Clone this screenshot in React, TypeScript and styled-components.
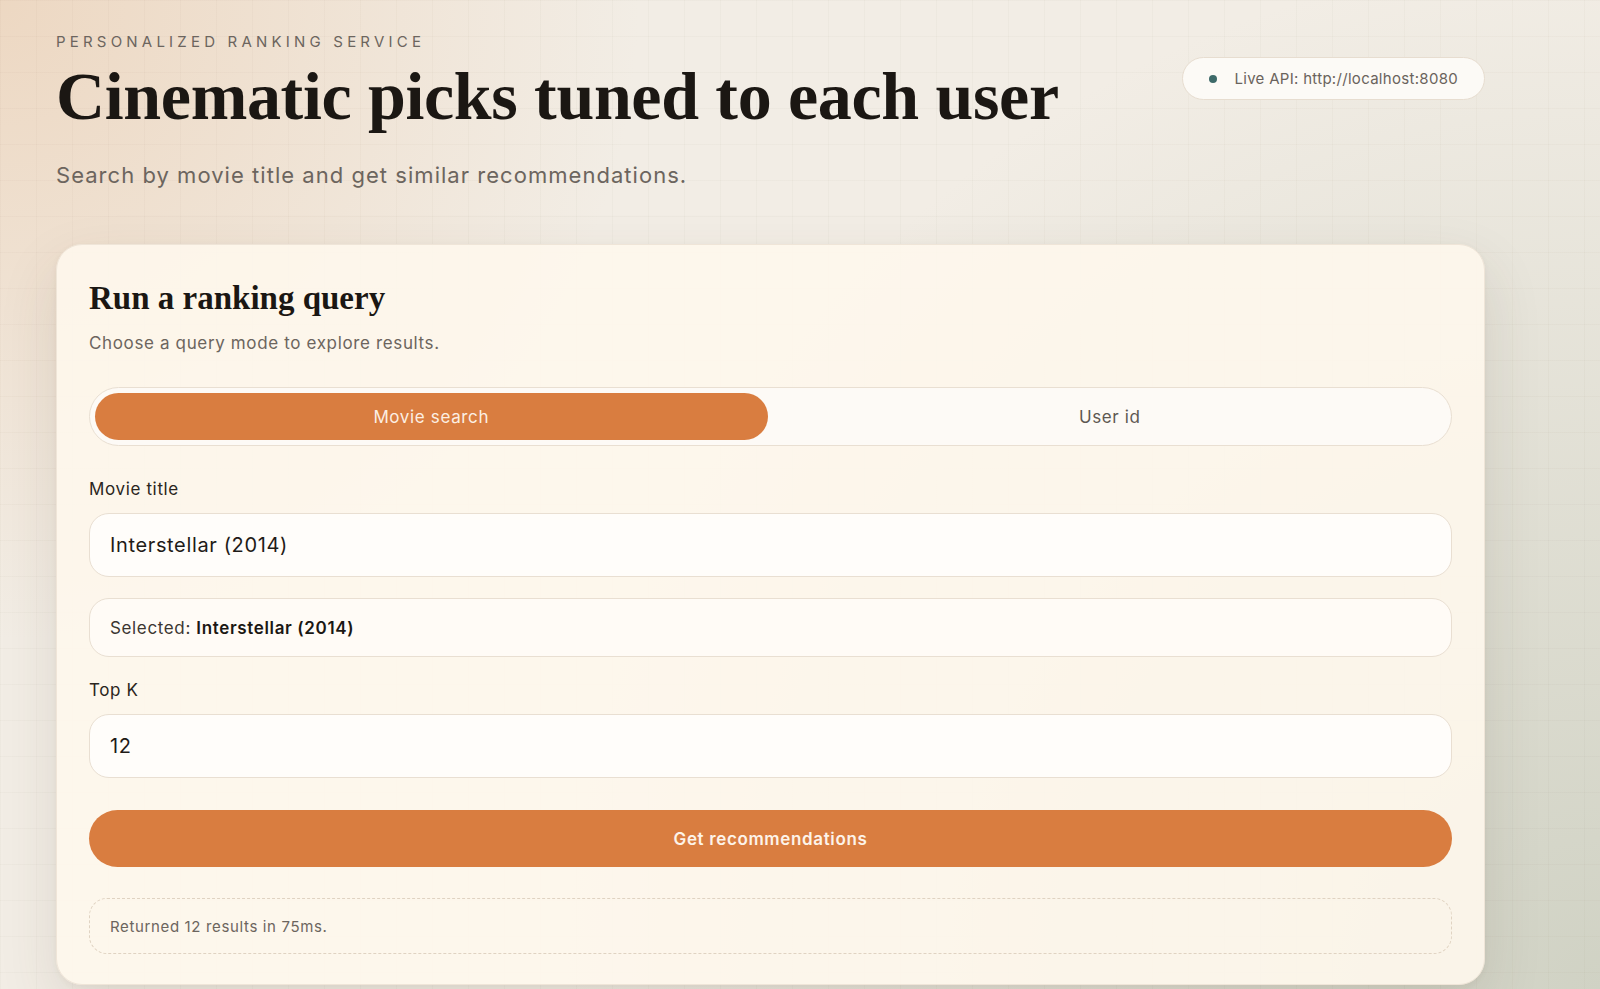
import * as React from 'react';
import styled, { createGlobalStyle } from 'styled-components';

const GlobalStyle = createGlobalStyle`
  * {
    box-sizing: border-box;
  }
  html, body {
    margin: 0;
    padding: 0;
  }
  body {
    min-height: 100vh;
    font-family: Inter, 'Noto Sans', sans-serif;
    letter-spacing: 0.04em;
    color: #1d1915;
    background-color: #f2ede5;
    background-image:
      linear-gradient(rgba(120, 100, 80, 0.035) 1px, transparent 1px),
      linear-gradient(90deg, rgba(120, 100, 80, 0.035) 1px, transparent 1px),
      radial-gradient(circle at 0% 0%, rgba(236, 212, 188, 0.85) 0, rgba(236, 212, 188, 0) 34%),
      radial-gradient(circle at 100% 100%, rgba(208, 210, 196, 1) 0, rgba(208, 210, 196, 0) 55%);
    background-size: 36px 36px, 36px 36px, 100% 100%, 100% 100%;
  }
`;

const Shell = styled.main`
  width: 1429px;
  margin-left: 56px;
  padding: 32px 0 6px;
`;

const Header = styled.header`
  display: flex;
  justify-content: space-between;
  align-items: flex-start;
`;

const HeaderText = styled.div`
  display: flex;
  flex-direction: column;
`;

const Eyebrow = styled.div`
  font-size: 15px;
  line-height: 20px;
  letter-spacing: 0.28em;
  text-transform: uppercase;
  color: #6c655e;
`;

const Title = styled.h1`
  margin: 8px 0 0;
  font-family: 'Liberation Serif', 'DejaVu Serif', serif;
  font-weight: 700;
  font-size: 68px;
  line-height: 72px;
  letter-spacing: -0.005em;
  color: #1b1713;
`;

const Lead = styled.p`
  margin: 27px 0 0;
  font-size: 22px;
  line-height: 33px;
  letter-spacing: 0.047em;
  color: #6c655e;
`;

const StatusPill = styled.div`
  margin-top: 25px;
  display: flex;
  align-items: center;
  gap: 17px;
  height: 43px;
  padding: 0 26px;
  border: 1.5px solid #e7ddd0;
  border-radius: 999px;
  background: #fcfaf6;
  font-size: 15px;
  letter-spacing: 0.02em;
  color: #6a635c;
`;

const Dot = styled.span`
  width: 8px;
  height: 8px;
  border-radius: 50%;
  background: #3d6a69;
`;

const Card = styled.section`
  margin-top: 52px;
  padding: 34px 32px 30px;
  border: 1.5px solid #efe5d8;
  border-radius: 26px;
  background: rgba(254, 247, 236, 0.9);
  box-shadow: 0 24px 60px rgba(70, 60, 45, 0.12), 0 2px 6px rgba(70, 60, 45, 0.05);
`;

const CardTitle = styled.h2`
  margin: 0;
  font-family: 'Liberation Serif', 'DejaVu Serif', serif;
  font-weight: 700;
  font-size: 33px;
  line-height: 38px;
  letter-spacing: 0;
  color: #1b1713;
`;

const CardSub = styled.p`
  margin: 14px 0 0;
  font-size: 17px;
  line-height: 25px;
  color: #6c655e;
`;

const Toggle = styled.div`
  margin-top: 31px;
  display: grid;
  grid-template-columns: 1fr 1fr;
  gap: 6px;
  padding: 5px;
  height: 59px;
  border: 1.5px solid #e9dfd2;
  border-radius: 999px;
  background: #fdfaf6;
`;

const ToggleOption = styled.button<{ $active?: boolean }>`
  border: none;
  border-radius: 999px;
  font-family: inherit;
  font-size: 17px;
  letter-spacing: inherit;
  cursor: pointer;
  background: ${(p) => (p.$active ? '#d97d40' : 'transparent')};
  color: ${(p) => (p.$active ? '#fcefe3' : '#5e5852')};
`;

const Form = styled.div`
  margin-top: 31px;
  display: flex;
  flex-direction: column;
  gap: 21px;
`;

const Field = styled.label`
  display: flex;
  flex-direction: column;
  gap: 11px;
`;

const Label = styled.span`
  font-size: 17px;
  line-height: 25px;
  color: #2a2520;
`;

const Input = styled.input`
  height: 64px;
  padding: 0 20px;
  border: 1.5px solid #e9dfd2;
  border-radius: 20px;
  background: #fffdfa;
  font-family: inherit;
  font-size: 20px;
  letter-spacing: inherit;
  color: #1f1b17;
  outline: none;
`;

const Selected = styled.div`
  display: flex;
  align-items: center;
  height: 59px;
  padding: 0 20px;
  border: 1.5px solid #e9dfd2;
  border-radius: 20px;
  background: #fffbf6;
  font-size: 17px;
  color: #3b3631;

  strong {
    font-weight: 600;
    color: #1b1713;
  }
`;

const SubmitButton = styled.button`
  display: block;
  width: 100%;
  margin-top: 32px;
  height: 57px;
  border: none;
  border-radius: 999px;
  background: #d97d40;
  color: #fdf3e9;
  font-family: inherit;
  font-size: 17px;
  font-weight: 600;
  letter-spacing: inherit;
  cursor: pointer;
`;

const Status = styled.div`
  margin-top: 31px;
  display: flex;
  align-items: center;
  height: 56px;
  padding: 0 20px;
  border: 1.5px dashed #e0d3c2;
  border-radius: 18px;
  font-size: 15px;
  color: #6c655e;
`;

export default function App() {
  const [mode, setMode] = React.useState<'movie' | 'user'>('movie');
  const [title, setTitle] = React.useState('Interstellar (2014)');
  const [topK, setTopK] = React.useState('12');

  return (
    <>
      <GlobalStyle />
      <Shell>
        <Header>
          <HeaderText>
            <Eyebrow>Personalized ranking service</Eyebrow>
            <Title>Cinematic picks tuned to each user</Title>
            <Lead>Search by movie title and get similar recommendations.</Lead>
          </HeaderText>
          <StatusPill>
            <Dot />
            Live API: http://localhost:8080
          </StatusPill>
        </Header>

        <Card>
          <CardTitle>Run a ranking query</CardTitle>
          <CardSub>Choose a query mode to explore results.</CardSub>

          <Toggle>
            <ToggleOption $active={mode === 'movie'} onClick={() => setMode('movie')}>
              Movie search
            </ToggleOption>
            <ToggleOption $active={mode === 'user'} onClick={() => setMode('user')}>
              User id
            </ToggleOption>
          </Toggle>

          <Form>
            <Field>
              <Label>Movie title</Label>
              <Input value={title} onChange={(e) => setTitle(e.target.value)} />
            </Field>
            <Selected>
              Selected:&nbsp;<strong>{title}</strong>
            </Selected>
            <Field>
              <Label>Top K</Label>
              <Input value={topK} onChange={(e) => setTopK(e.target.value)} />
            </Field>
          </Form>

          <SubmitButton>Get recommendations</SubmitButton>
          <Status>Returned 12 results in 75ms.</Status>
        </Card>
      </Shell>
    </>
  );
}
